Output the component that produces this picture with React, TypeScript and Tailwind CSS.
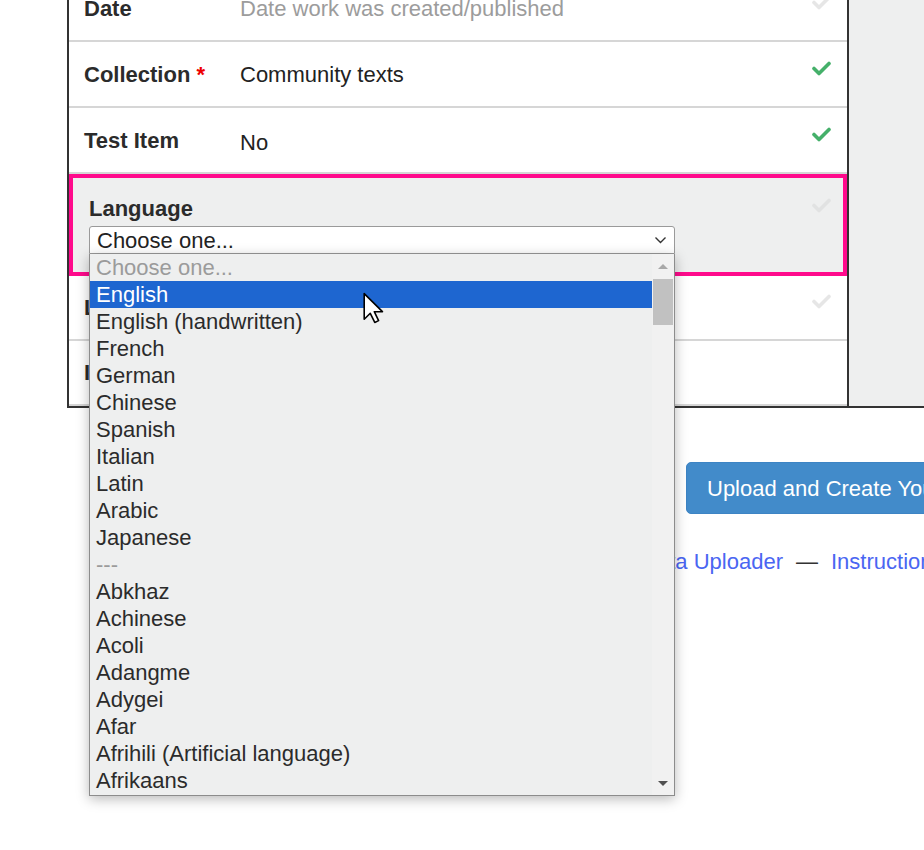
import React from 'react';

const FONT = "font-['Liberation_Sans',Arial,sans-serif]";

const Check: React.FC<{ color: string }> = ({ color }) => (
  <svg width="19" height="15" viewBox="0 0 19 15" className="shrink-0">
    <path d="M2 7.5 L7 12.5 L17 2.5" fill="none" stroke={color} strokeWidth="3.6" strokeLinecap="round" strokeLinejoin="round" />
  </svg>
);

const languages = [
  'English',
  'English (handwritten)',
  'French',
  'German',
  'Chinese',
  'Spanish',
  'Italian',
  'Latin',
  'Arabic',
  'Japanese',
  '---',
  'Abkhaz',
  'Achinese',
  'Acoli',
  'Adangme',
  'Adygei',
  'Afar',
  'Afrihili (Artificial language)',
  'Afrikaans',
];

const Row: React.FC<{ label: React.ReactNode; children?: React.ReactNode; checkColor: string }> = ({
  label,
  children,
  checkColor,
}) => (
  <div className="flex h-[66px] items-center border-b-2 border-[#d6d6d6] pl-[15px] pr-[16px]">
    <div className="w-[156px] text-[22px] font-bold text-[#2b2b2b]">{label}</div>
    <div className="flex-1 text-[22px] text-[#222]">{children}</div>
    <div className="-mt-[12px]">
      <Check color={checkColor} />
    </div>
  </div>
);

const LanguageList: React.FC = () => (
  <div className="absolute left-0 top-full z-10 flex h-[542px] w-[586px] border border-t-0 border-[#8c8c8c] bg-[#eeefef] shadow-[0_3px_12px_rgba(0,0,0,0.28)]">
    <div className="flex-1 overflow-hidden">
      <div className="h-[27px] whitespace-nowrap pl-[6px] text-[22px] leading-[27px] text-[#9b9b9b]">Choose one...</div>
      {languages.map((lang, i) => (
        <div
          key={lang}
          className={
            i === 0
              ? 'h-[27px] whitespace-nowrap bg-[#1e66d0] pl-[6px] text-[22px] leading-[27px] text-white'
              : lang === '---'
                ? 'h-[27px] whitespace-nowrap pl-[6px] text-[22px] leading-[27px] text-[#9b9b9b]'
                : 'h-[27px] whitespace-nowrap pl-[6px] text-[22px] leading-[27px] text-[#2b2b2b]'
          }
        >
          {lang}
        </div>
      ))}
    </div>
    <div className="flex w-[22px] flex-col items-center bg-[#f1f1f1]">
      <svg width="12" height="7" viewBox="0 0 12 7" className="mt-[9px]">
        <path d="M1 6 L6 1 L11 6 Z" fill="#a8a8a8" />
      </svg>
      <div className="mt-[9px] h-[46px] w-[20px] bg-[#c1c1c1]" />
      <div className="flex-1" />
      <svg width="12" height="7" viewBox="0 0 12 7" className="mb-[8px]">
        <path d="M1 1 L11 1 L6 6 Z" fill="#505050" />
      </svg>
    </div>
  </div>
);

const Cursor: React.FC = () => (
  <svg width="22" height="32" viewBox="0 0 13 20" className="absolute left-[362px] top-[292px] z-20">
    <path
      d="M1 1 L1 17 L4.8 13.3 L7.6 19 L10 17.9 L7.3 12.3 L12.4 12.3 Z"
      fill="#ffffff"
      stroke="#000000"
      strokeWidth="1"
      strokeLinejoin="round"
    />
  </svg>
);

const App: React.FC = () => {
  return (
    <div className={`relative min-h-[850px] overflow-hidden bg-white ${FONT}`}>
      <div className="-mt-[24px] ml-[67px] flex border-b-2 border-[#333]">
        <div className="w-[782px] shrink-0 border-x-2 border-[#333] bg-white">
          <Row label="Date" checkColor="#e6e6e6">
            <span className="text-[#9c9c9c]">Date work was created/published</span>
          </Row>
          <Row
            label={
              <>
                Collection <span className="text-[#e00]">*</span>
              </>
            }
            checkColor="#45b06a"
          >
            Community texts
          </Row>
          <Row label="Test Item" checkColor="#45b06a">
            <span className="relative top-[2px]">No</span>
          </Row>

          <div className="flex border-4 border-[#ff0a8c] bg-[#eeefef] pb-[18px] pl-[16px] pr-[12px] pt-[19px]">
            <div className="flex w-[586px] flex-col">
              <div className="h-[23px] text-[22px] font-bold leading-[23px] text-[#2b2b2b]">Language</div>
              <div className="relative mt-[6px]">
                <div className="flex h-[28px] items-center justify-between rounded-t-[3px] border border-[#9a9a9a] bg-white pl-[7px] pr-[7px] text-[22px] text-[#222]">
                  <span>Choose one...</span>
                  <svg width="13" height="8" viewBox="0 0 13 8">
                    <path d="M1.5 1.5 L6.5 6.5 L11.5 1.5" fill="none" stroke="#333" strokeWidth="1.4" />
                  </svg>
                </div>
                <LanguageList />
              </div>
            </div>
            <div className="flex-1" />
            <div className="mt-[1px]">
              <Check color="#e1e2e2" />
            </div>
          </div>

          <div className="flex h-[65px] items-center border-b-2 border-[#d6d6d6] pl-[15px] pr-[16px]">
            <div className="flex-1 text-[22px] font-bold text-[#2b2b2b]">License</div>
            <div className="-mt-[12px]">
              <Check color="#e6e6e6" />
            </div>
          </div>
          <div className="flex h-[65px] items-center border-b-2 border-[#d6d6d6] pl-[15px] pr-[16px]">
            <div className="flex-1 text-[22px] font-bold text-[#2b2b2b]">Identifier</div>
          </div>
        </div>
        <div className="flex-1 bg-[#eeefef]" />
      </div>

      <div className="ml-[686px] mt-[54px] w-max">
        <button className="h-[52px] whitespace-nowrap rounded-[5px] border border-[#3d84c4] bg-[#428bca] pl-[20px] pr-[20px] text-[22px] text-white">
          Upload and Create Your Item
        </button>
      </div>

      <div className="mt-[31px] flex items-center whitespace-nowrap text-[22px]">
        <div className="w-[783px] shrink-0 text-right text-[#4a66f2]">Use the Bulk Data Uploader</div>
        <span className="mx-[13px] text-[#333]">—</span>
        <span className="text-[#4a66f2]">Instructions</span>
      </div>

      <Cursor />
    </div>
  );
};

export default App;
